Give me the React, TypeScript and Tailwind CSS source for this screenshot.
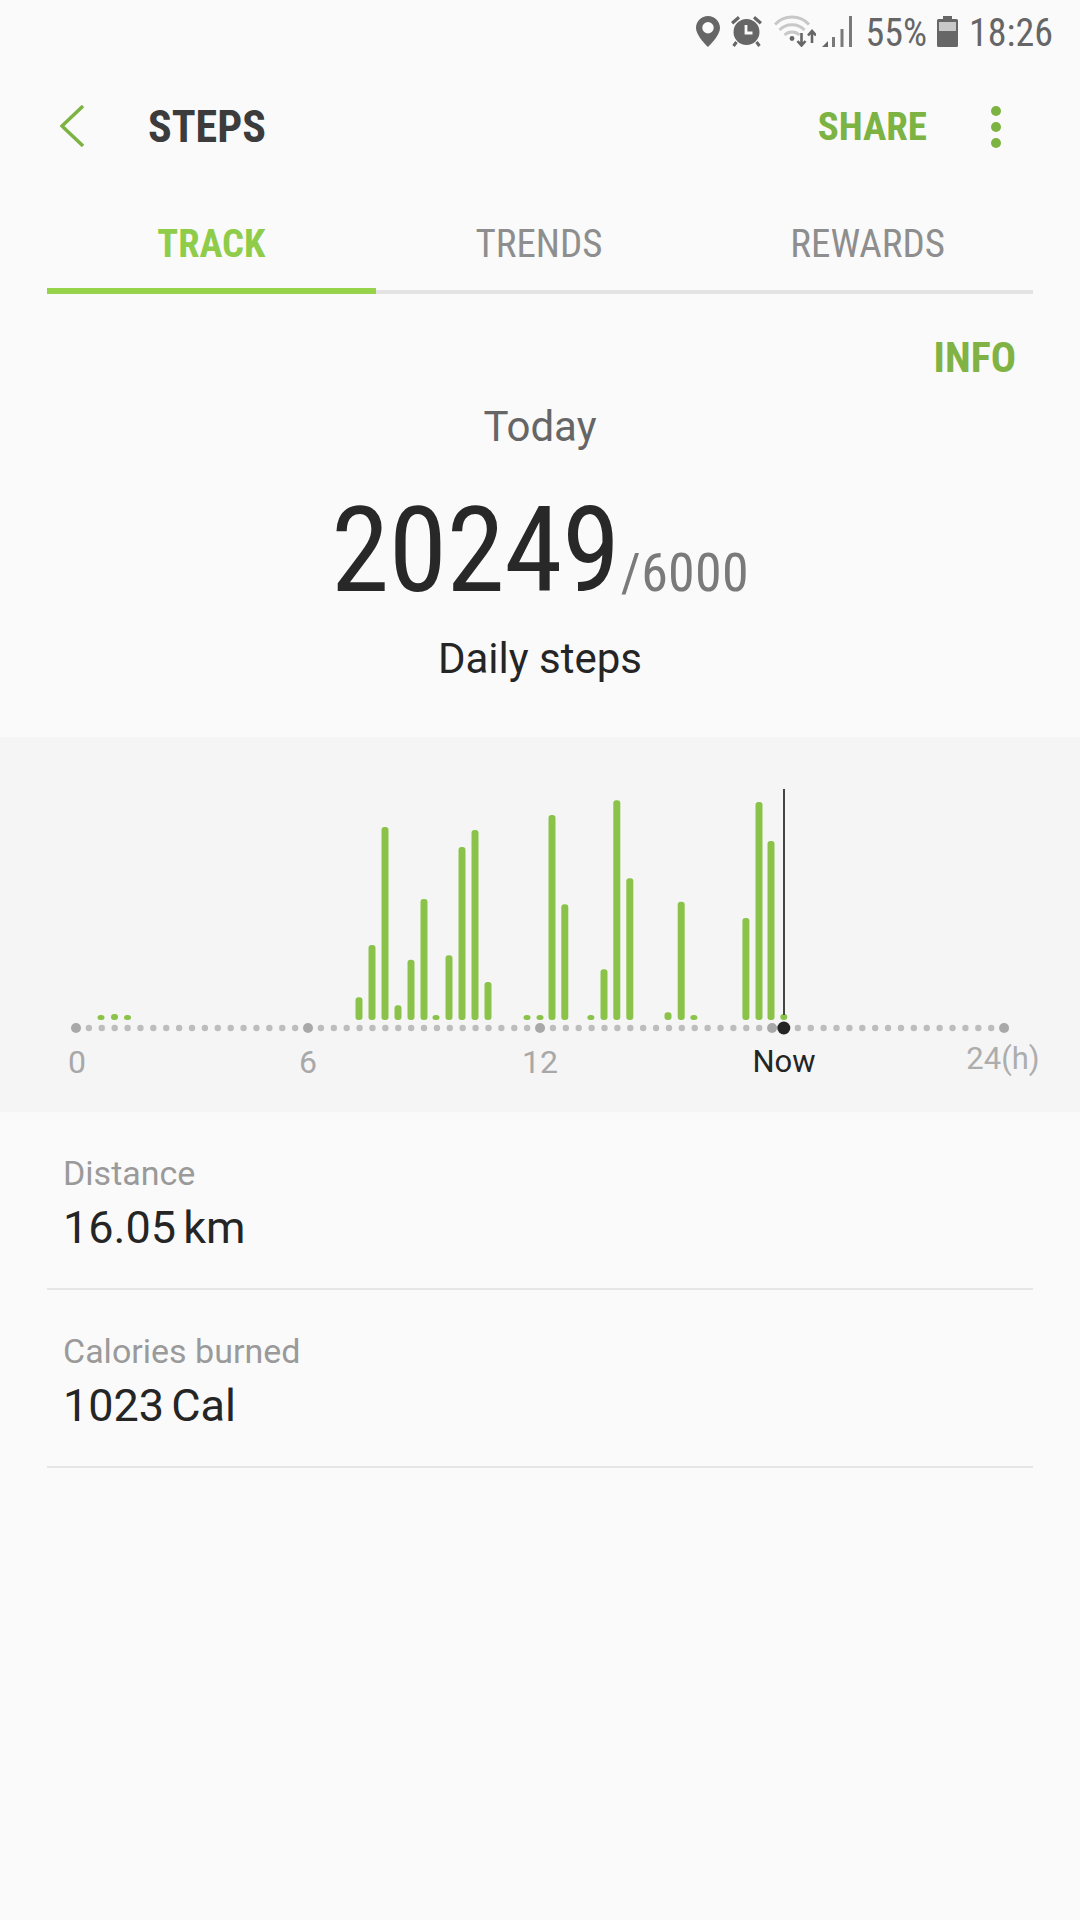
const bars: [number, number][] = [
  [101, 1015], [114.5, 1014], [127.5, 1015], [359, 997.3], [372, 945], [385, 827], [398, 1005.3], [411, 959.7],
  [424, 899], [436, 1015], [449, 955.3], [462, 847], [475, 830], [488, 982], [527, 1015], [540, 1015],
  [552, 815], [564.8, 904.3], [590.9, 1015], [604, 969.3], [616.8, 800.3], [629.8, 878.3], [668, 1012.3],
  [681.2, 901.7], [693.9, 1015], [745.9, 918], [759, 802], [771, 841], [783.8, 1014],
];
const dots = Array.from({ length: 73 }, (_, i) => i);
const top = 737;

function Chart() {
  return (
    <svg viewBox="0 0 1080 375" className="block h-full w-full">
      {bars.map(([x, y]) => (
        <rect key={x} x={x - 3.5} y={y - top} width={7} height={1020 - y} rx={3} fill="#8bc34a" />
      ))}
      {dots.map((i) => {
        const big = i % 18 === 0;
        return <circle key={i} cx={76 + i * 12.89} cy={1028 - top} r={big ? 5 : 3.2} fill={big ? "#a8a8a8" : "#bdbdbd"} />;
      })}
      <rect x={783} y={789 - top} width={2} height={226} fill="#444444" />
      <circle cx={783.8} cy={1028 - top} r={6.5} fill="#252525" />
    </svg>
  );
}

function Pin() {
  return (
    <svg viewBox="0 0 24 31" className="h-[31px] w-[24px]">
      <path fillRule="evenodd" fill="#666666" d="M12 0C5.4 0 0 5.2 0 11.8 0 20 12 31 12 31s12-11 12-19.2C24 5.2 18.6 0 12 0Zm0 6a5.7 5.7 0 1 1 0 11.4A5.7 5.7 0 0 1 12 6Z" />
    </svg>
  );
}

function Alarm() {
  return (
    <svg viewBox="0 0 31 32" className="h-[32px] w-[31px]">
      <circle cx="15.500" cy="17" r="13" fill="#666666" />
      <path d="M0 7 7 1 9 3.500 2.200 9.500ZM31 7 24 1 22 3.500 28.800 9.500Z" fill="#666666" />
      <path d="M5.500 27 2.500 31M25.500 27 28.500 31" stroke="#666666" strokeWidth="3" fill="none" />
      <path d="M15 10V18H21.500" stroke="#fafafa" strokeWidth="2.800" fill="none" />
    </svg>
  );
}

function Wifi() {
  return (
    <svg viewBox="0 0 42 32" className="h-[32px] w-[42px]">
      <g fill="none" stroke="#c8c8c8" strokeWidth="2.800">
        <path d="M1 9.500C10 -0.500 26 -0.500 35 9.500" />
        <path d="M5.500 15C12 8 24 8 30.500 15" />
        <path d="M10.500 20C14.500 16 21.500 16 25.500 20" />
      </g>
      <circle cx="18" cy="23.500" r="2.400" fill="#666666" />
      <path d="M27.500 18V30M23.500 26 27.500 30.500 31.500 26" stroke="#666666" strokeWidth="2.600" fill="none" />
      <path d="M38 28V16.500M34 20.500 38 16 42 20.500" stroke="#666666" strokeWidth="2.600" fill="none" />
    </svg>
  );
}

function Signal() {
  return (
    <svg viewBox="0 0 30 31" className="h-[31px] w-[30px]">
      <path d="M0 31 6 25V31Z" fill="#666666" />
      <rect x="10" y="21" width="3" height="10" fill="#7a7a7a" />
      <rect x="18.500" y="13" width="3" height="18" fill="#7a7a7a" />
      <rect x="27" y="0" width="3" height="31" fill="#7a7a7a" />
    </svg>
  );
}

function Battery() {
  return (
    <svg viewBox="0 0 21 31" className="h-[31px] w-[21px]">
      <path d="M6 0H15V3H19.500A1.500 1.500 0 0 1 21 4.500V29.500A1.500 1.500 0 0 1 19.500 31H1.500A1.500 1.500 0 0 1 0 29.500V4.500A1.500 1.500 0 0 1 1.500 3H6Z" fill="#666666" />
      <rect x="2" y="6" width="17" height="9" fill="#c8c8c8" />
    </svg>
  );
}

function Row({ label, value }: { label: string; value: string }) {
  return (
    <div className="border-b-2 border-[#e6e6e6] pl-[16px] pt-[39px] pb-[32px]">
      <div className="h-[44px] text-[34px] leading-[44px] text-[#9a9a9a]">{label}</div>
      <div className="mt-[5px] h-[56px] text-[45px] leading-[56px] [word-spacing:-4px] text-[#252525]">{value}</div>
    </div>
  );
}

export default function App() {
  const cond = "[font-stretch:75%]";
  return (
    <div className="h-[1920px] w-[1080px] overflow-hidden bg-[#fafafa] font-['Roboto',sans-serif]">
      <div className="flex h-[62px] items-center justify-end pr-[27px] text-[38px] text-[#666666]">
        <Pin />
        <div className="ml-[11px]"><Alarm /></div>
        <div className="ml-[12px]"><Wifi /></div>
        <div className="ml-[6px]"><Signal /></div>
        <span className={`ml-[14px] pt-[5px] ${cond}`}>55%</span>
        <div className="ml-[10px]"><Battery /></div>
        <span className={`ml-[11px] pt-[5px] ${cond}`}>18:26</span>
      </div>

      <div className="flex h-[128px] items-center pl-[60px] pr-[79px]">
        <svg viewBox="0 0 24 42" className="h-[42px] w-[24px]">
          <path d="M23 1 2 21 23 41" fill="none" stroke="#7cb342" strokeWidth="3.400" />
        </svg>
        <span className={`ml-[64px] pt-[2px] text-[44px] font-bold text-[#3c3c3c] ${cond}`}>STEPS</span>
        <span className={`ml-auto pt-[2px] text-[39px] font-bold text-[#7cb342] ${cond}`}>SHARE</span>
        <div className="ml-[64px] flex flex-col gap-[6px] pt-[2px]">
          <div className="h-[10px] w-[10px] rounded-full bg-[#7cb342]" />
          <div className="h-[10px] w-[10px] rounded-full bg-[#7cb342]" />
          <div className="h-[10px] w-[10px] rounded-full bg-[#7cb342]" />
        </div>
      </div>

      <div className="mx-[47px] grid grid-cols-3">
        <div className={`flex h-[104px] items-center justify-center border-b-[6px] border-[#96d34b] pt-[9px] text-[38.500px] font-bold text-[#8fcc4a] ${cond}`}>TRACK</div>
        <div className={`flex h-[104px] items-center justify-center border-b-4 border-[#e3e3e3] pt-[8px] pr-[2px] text-[39px] text-[#8e8e8e] ${cond}`}>TRENDS</div>
        <div className={`flex h-[104px] items-center justify-center border-b-4 border-[#e3e3e3] pt-[8px] pr-[2px] text-[39px] text-[#8e8e8e] ${cond}`}>REWARDS</div>
      </div>

      <div className={`mt-[40px] h-[48px] pr-[64px] text-right text-[42px] leading-[48px] font-bold text-[#80b244] ${cond}`}>INFO</div>
      <div className="mt-[19px] h-[52px] text-center text-[42px] leading-[52px] text-[#666666]">Today</div>
      <div className="mt-[28px] flex h-[140px] items-baseline justify-center leading-[140px]">
        <span className={`text-[118px] tracking-[-0.5px] text-[#282828] ${cond}`}>20249</span>
        <span className={`ml-[1px] text-[54px] tracking-[0.3px] text-[#7a7a7a] ${cond}`}>/6000</span>
      </div>
      <div className="mt-[12px] h-[52px] text-center text-[42px] leading-[52px] text-[#252525]">Daily steps</div>

      <div className="relative mt-[52px] h-[375px] bg-[#f5f5f5]">
        <Chart />
        <span className="absolute left-[47px] top-[305px] w-[60px] text-center text-[32px] leading-[40px] text-[#a8a8a8]">0</span>
        <span className="absolute left-[278px] top-[305px] w-[60px] text-center text-[32px] leading-[40px] text-[#a8a8a8]">6</span>
        <span className="absolute left-[510px] top-[305px] w-[60px] text-center text-[32px] leading-[40px] text-[#a8a8a8]">12</span>
        <span className="absolute left-[744px] top-[305px] w-[80px] text-center text-[31px] leading-[40px] text-[#252525]">Now</span>
        <span className="absolute left-[953px] top-[302px] w-[100px] text-center text-[31px] leading-[40px] text-[#adadad]">24(h)</span>
      </div>

      <div className="mx-[47px]">
        <Row label="Distance" value="16.05 km" />
        <Row label="Calories burned" value="1023 Cal" />
      </div>
    </div>
  );
}
